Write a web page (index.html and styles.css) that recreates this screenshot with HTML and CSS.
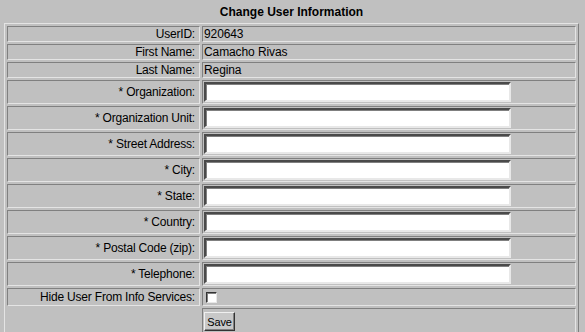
FILE: index.html
```html
<!DOCTYPE html>
<html lang="en">
<head>
    <meta charset="UTF-8">
    <title>Change User Information</title>
    <link rel="stylesheet" href="styles.css">
</head>
<body>
    <div class="page">
        <table class="info">
            <caption>Change User Information</caption>
            <tr><td class="lbl">UserID:</td><td class="val">920643</td></tr>
            <tr><td class="lbl">First Name:</td><td class="val">Camacho Rivas</td></tr>
            <tr><td class="lbl">Last Name:</td><td class="val">Regina</td></tr>
            <tr class="field"><td class="lbl">* Organization:</td><td class="val"><input type="text"></td></tr>
            <tr class="field"><td class="lbl">* Organization Unit:</td><td class="val"><input type="text"></td></tr>
            <tr class="field"><td class="lbl">* Street Address:</td><td class="val"><input type="text"></td></tr>
            <tr class="field"><td class="lbl">* City:</td><td class="val"><input type="text"></td></tr>
            <tr class="field"><td class="lbl">* State:</td><td class="val"><input type="text"></td></tr>
            <tr class="field"><td class="lbl">* Country:</td><td class="val"><input type="text"></td></tr>
            <tr class="field"><td class="lbl">* Postal Code (zip):</td><td class="val"><input type="text"></td></tr>
            <tr class="field"><td class="lbl">* Telephone:</td><td class="val"><input type="text"></td></tr>
            <tr class="check"><td class="lbl">Hide User From Info Services:</td><td class="val"><input type="checkbox"></td></tr>
            <tr class="submit"><td class="blank"></td><td class="val"><button>Save</button></td></tr>
        </table>
    </div>
</body>
</html>
```
FILE: styles.css
```css
body{margin: 0;background: #c0c0c0;font-family: "Liberation Sans", Arial, sans-serif;font-size: 12px;color: #000;}
.page{padding: 0 4px;}
.info{width: 575px;border-collapse: separate;border-spacing: 2px;border: 1px solid;border-color: #e4e4e4 #808080 #808080 #e4e4e4;}
.info caption{font-weight: bold;line-height: 14px;padding: 5px 0 4px;}
.info td{border: 1px solid;border-color: #808080 #e4e4e4 #e4e4e4 #808080;padding: 0 1px;height: 14px;line-height: 14px;}
.lbl{width: 186px;text-align: right;padding-right: 4px !important;letter-spacing: -0.2px;}
.val{letter-spacing: -0.1px;}
.field td{height: 22px;}
.check td{height: 16px;}
.submit td{height: 22px;}
.blank{border-color: transparent !important;}
input[type=text]{display: block;box-sizing: border-box;width: 307px;height: 20px;margin: 0;padding: 0;background: #fff;border: 2px solid;border-color: #4a4a4a #e8e8e8 #e8e8e8 #4a4a4a;box-shadow: inset 1px 1px 0 #808080;}
input[type=checkbox]{appearance: none;-webkit-appearance: none;display: block;width: 11px;height: 11px;margin: 1px 0 0 2px;background: #fff;border: 1px solid;border-color: #333 #e8e8e8 #e8e8e8 #333;box-shadow: inset 1px 1px 0 #808080;}
button{display: block;margin: 3px 0 1px;height: 19px;width: 31px;padding: 0;font-family: "Liberation Sans", Arial, sans-serif;font-size: 11px;letter-spacing: -0.2px;background: #c8c8c8;border: 1px solid;border-color: #f0f0f0 #333 #333 #f0f0f0;box-shadow: inset -1px -1px 0 #808080;}
```
